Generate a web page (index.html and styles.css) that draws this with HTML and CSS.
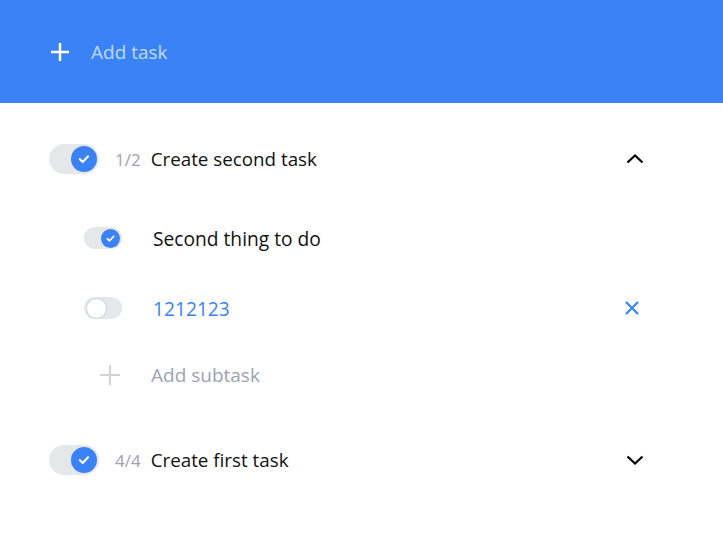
FILE: index.html
```html
<!DOCTYPE html>
<html>
<head>
<meta charset="utf-8">
<link rel="stylesheet" href="styles.css">
</head>
<body>
<header class="header">
  <svg class="header-plus" width="20" height="20" viewBox="0 0 20 20"><path d="M10 1v18M1 10h18" stroke="#fff" stroke-width="2.4" fill="none"/></svg>
  <span class="header-text">Add task</span>
</header>
<main class="list">
  <section class="task">
    <div class="task-row">
      <span class="toggle toggle-lg on"><span class="knob"><svg viewBox="0 0 12 12"><path d="M2.5 6.2l2.4 2.3 4.6-4.8" stroke="#fff" stroke-width="1.8" fill="none" stroke-linecap="round" stroke-linejoin="round"/></svg></span></span>
      <span class="count">1/2</span>
      <span class="title">Create second task</span>
      <svg class="chev" width="18" height="12" viewBox="0 0 18 12"><path d="M1.5 9.5L9 2.5l7.5 7" stroke="#000" stroke-width="2.2" fill="none"/></svg>
    </div>
    <div class="subtasks">
      <div class="sub-row">
        <span class="toggle toggle-sm on"><span class="knob"><svg viewBox="0 0 12 12"><path d="M2.5 6.2l2.4 2.3 4.6-4.8" stroke="#fff" stroke-width="1.8" fill="none" stroke-linecap="round" stroke-linejoin="round"/></svg></span></span>
        <span class="sub-title">Second thing to do</span>
      </div>
      <div class="sub-row">
        <span class="toggle toggle-sm"><span class="knob"></span></span>
        <span class="sub-title editing">1212123</span>
        <svg class="close" width="16" height="16" viewBox="0 0 16 16"><path d="M2 2l12 12M14 2L2 14" stroke="#3b82f6" stroke-width="2.2" fill="none"/></svg>
      </div>
      <div class="add-sub">
        <svg class="sub-plus" width="20" height="20" viewBox="0 0 20 20"><path d="M10 0v20M0 10h20" stroke="#d1d5db" stroke-width="2" fill="none"/></svg>
        <span class="add-sub-text">Add subtask</span>
      </div>
    </div>
  </section>
  <section class="task">
    <div class="task-row">
      <span class="toggle toggle-lg on"><span class="knob"><svg viewBox="0 0 12 12"><path d="M2.5 6.2l2.4 2.3 4.6-4.8" stroke="#fff" stroke-width="1.8" fill="none" stroke-linecap="round" stroke-linejoin="round"/></svg></span></span>
      <span class="count">4/4</span>
      <span class="title">Create first task</span>
      <svg class="chev" width="18" height="12" viewBox="0 0 18 12"><path d="M1.5 2.5L9 9.5l7.5-7" stroke="#000" stroke-width="2.2" fill="none"/></svg>
    </div>
  </section>
</main>
</body>
</html>
```
FILE: styles.css
```css
* { box-sizing: border-box; }
html, body { margin: 0; padding: 0; background: #fff; }
body { font-family: "Open Sans", "Noto Sans", sans-serif; color: #111; }

.header {
  height: 103px;
  background: #3b82f6;
  display: flex;
  align-items: center;
  padding-left: 50px;
  gap: 21px;
}
.header-plus { display: block; }
.header-text { color: #bfdbfe; font-size: 19px; }

.list { padding: 40px 79px 0 49px; }
.task { margin-bottom: 54px; }
.task-row {
  display: flex;
  align-items: center;
  height: 32px;
}
.count { color: #9ca3af; font-size: 17px; margin-left: 16px; margin-right: 10px; }
.title { font-size: 18.8px; color: #111; flex: 1; }
.chev { display: block; }

.toggle {
  position: relative;
  display: inline-flex;
  align-items: center;
  background: #e5e7eb;
  border-radius: 999px;
  flex-shrink: 0;
}
.toggle .knob {
  display: flex;
  align-items: center;
  justify-content: center;
  border-radius: 50%;
  background: #fff;
  box-shadow: 0 0 0 1px #d1d5db;
}
.toggle.on .knob { background: #3b82f6; box-shadow: none; }
.toggle-lg { width: 50px; height: 30px; padding: 2px; }
.toggle-lg .knob { width: 26px; height: 26px; }
.toggle-lg .knob svg { width: 14px; height: 14px; }
.toggle-sm { width: 38px; height: 22px; padding: 2px; }
.toggle-sm .knob { width: 19px; height: 19px; margin-left: 1px; }
.toggle-sm .knob svg { width: 11px; height: 11px; }
.toggle.on { justify-content: flex-end; }

.subtasks { padding-left: 35px; padding-top: 51px; }
.sub-row {
  display: flex;
  align-items: center;
  height: 24px;
  margin-bottom: 46px;
}
.sub-title { font-size: 19.2px; margin-left: 31px; flex: 1; color: #111; }
.sub-title.editing { color: #3b82f6; }
.close { margin-right: 4px; display: block; }
.add-sub { display: flex; align-items: center; padding-left: 16px; margin-top: -6px; height: 30px; }
.sub-plus { display: block; }
.add-sub-text { font-size: 19px; color: #9ca3af; margin-left: 31px; }
```
